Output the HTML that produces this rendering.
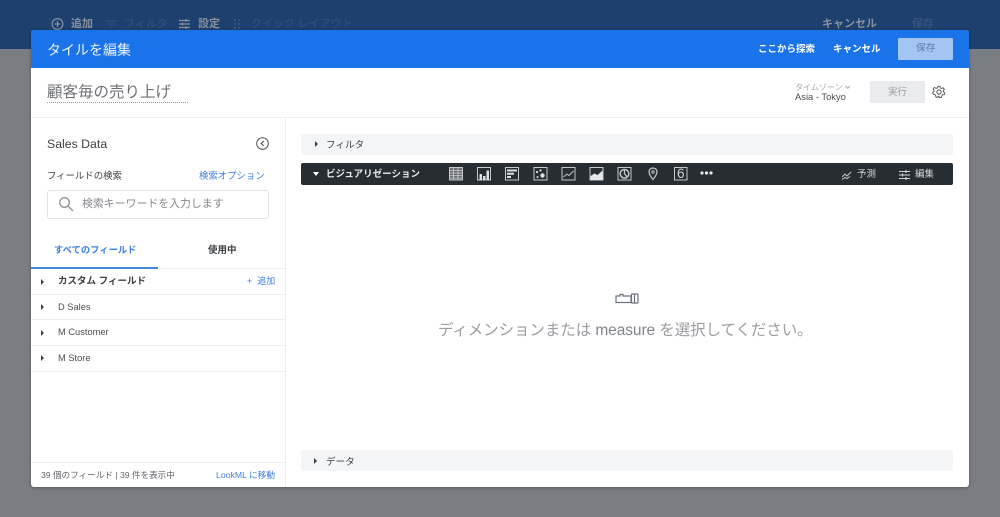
<!DOCTYPE html>
<html lang="ja"><head><meta charset="utf-8">
<style>
html,body{margin:0;padding:0}
body{width:1000px;height:517px;overflow:hidden;position:relative;background:#7a7d82;font-family:"Liberation Sans","Noto Sans CJK JP",sans-serif;color:#3c4043}
.a{position:absolute;white-space:nowrap;line-height:1}
svg{position:absolute;overflow:visible}
#root{position:absolute;left:0;top:0;width:1000px;height:517px;filter:blur(.35px)}
.b{font-weight:700}
.row{position:absolute;left:31px;width:254px;height:1px;background:#eceef0}
.tri{position:absolute;width:0;height:0;border-left:3.500px solid #3c4043;border-top:3px solid transparent;border-bottom:3px solid transparent}
.bar{position:absolute;left:301px;width:652px;background:#f4f5f7;border-radius:2px}
</style></head><body><div id="root">
<div class="a" style="left:0;top:0;width:1000px;height:49px;background:#1e406e"></div>
<svg style="left:51px;top:17px" width="14" height="14" fill="none" stroke="#87909e" stroke-width="1.2"><circle cx="6.500" cy="7" r="5.400"/><path d="M6.500 4v6M3.500 7h6"/></svg>
<div class="a b" style="left:71px;top:19px;font-size:11px;color:#87909e">追加</div>
<svg style="left:105px;top:19px" width="13" height="10" fill="none" stroke="#34547f" stroke-width="1"><path d="M1 2h10M3 5h6M5 8h2"/></svg>
<div class="a" style="left:124px;top:19px;font-size:11px;color:#34547f">フィルタ</div>
<svg style="left:179px;top:18px" width="12" height="12" fill="none" stroke="#87909e" stroke-width="1.2"><path d="M0 2.500h11M0 6h11M0 9.500h11M7 1v3M3.500 4.500v3M7 8v3"/></svg>
<div class="a b" style="left:198px;top:19px;font-size:11px;color:#87909e">設定</div>
<svg style="left:234px;top:19px" width="8" height="10" fill="#34547f"><rect x="0" y="0" width="2" height="2"/><rect x="4" y="0" width="2" height="2"/><rect x="0" y="4" width="2" height="2"/><rect x="4" y="4" width="2" height="2"/><rect x="0" y="8" width="2" height="2"/><rect x="4" y="8" width="2" height="2"/></svg>
<div class="a" style="left:251px;top:19px;font-size:11px;color:#34547f;letter-spacing:-.05px">クイック レイアウト</div>
<div class="a b" style="left:822px;top:19px;font-size:11px;color:#87909e">キャンセル</div>
<div class="a b" style="left:912px;top:19px;font-size:11px;color:#34547f">保存</div>

<div class="a" style="left:31px;top:30px;width:938px;height:457px;background:#fff;border-radius:3px;overflow:hidden;box-shadow:0 1px 3px rgba(0,0,0,.3)"></div>
<div class="a" style="left:31px;top:30px;width:938px;height:38px;background:#1a73e8;border-radius:3px 3px 0 0"></div>
<div class="a" style="left:47px;top:43px;font-size:14px;color:#eaf2fd">タイルを編集</div>
<div class="a b" style="left:758px;top:45px;font-size:9.500px;color:#fff">ここから探索</div>
<div class="a b" style="left:833px;top:45px;font-size:9.500px;color:#fff">キャンセル</div>
<div class="a" style="left:898px;top:38px;width:55px;height:22px;background:#a4c4f3;border-radius:1px"></div>
<div class="a" style="left:916px;top:44px;font-size:9.800px;color:#5f7da8">保存</div>

<div class="a" style="left:47px;top:85px;font-size:15.500px;color:#6d7075">顧客毎の売り上げ</div>
<div class="a" style="left:47px;top:102px;width:141px;height:0;border-top:1px dotted #6f9fec"></div>
<div class="a" style="left:795px;top:84px;font-size:8px;color:#a6a8ac">タイムゾーン</div>
<svg style="left:845px;top:85px" width="6" height="5" fill="none" stroke="#a6a8ac" stroke-width="1"><path d="M.5 1l2.300 2.300L5 1"/></svg>
<div class="a" style="left:795px;top:92px;font-size:9.400px;color:#4b4e52">Asia - Tokyo</div>
<div class="a" style="left:870px;top:81px;width:55px;height:22px;background:#e9ebef;border-radius:1px"></div>
<div class="a" style="left:888px;top:88px;font-size:9.500px;color:#9a9da2">実行</div>
<svg style="left:932px;top:85px" width="14" height="14" viewBox="0 0 24 24" fill="none" stroke="#55585c" stroke-width="1.800"><circle cx="12" cy="12" r="3.600"/><path d="M10 2h4l.6 3 2.400 1.100 2.700-1.500 2.500 3-2 2.300.3 2.600 2.500 1.500-1 3.800-3 0-1.700 2-.3 3-3.900.7-1.500-2.700h-1.200L9.800 23l-3.900-.7-.3-3-1.700-2-3 0-1-3.800 2.500-1.500.3-2.600-2-2.300 2.500-3 2.700 1.500L9.400 5z" stroke-linejoin="round" transform="translate(1.200 .5) scale(.9)"/></svg>
<div class="row" style="left:31px;width:938px;top:117px"></div>
<div class="a" style="left:285px;top:117px;width:1px;height:370px;background:#eceef0"></div>

<div class="a" style="left:47px;top:138px;font-size:12.300px;color:#3c4043">Sales Data</div>
<svg style="left:256px;top:137px" width="13" height="13" fill="none" stroke="#4f5256" stroke-width="1"><circle cx="6.500" cy="6.500" r="5.800"/><path d="M7.800 4L5.200 6.500l2.600 2.500" stroke-width="1.200"/></svg>
<div class="a" style="left:47px;top:171px;font-size:9.400px;color:#3c4043">フィールドの検索</div>
<div class="a" style="left:199px;top:171px;font-size:9.400px;color:#3f80e0">検索オプション</div>
<div class="a" style="left:47px;top:190px;width:220px;height:27px;border:1px solid #dfe1e5;border-radius:3px"></div>
<svg style="left:58px;top:196px" width="16" height="16" fill="none" stroke="#909397" stroke-width="1.300"><circle cx="6.500" cy="6.500" r="4.800"/><path d="M10 10l5 5"/></svg>
<div class="a" style="left:82px;top:199px;font-size:10.900px;color:#85888c">検索キーワードを入力します</div>
<div class="a b" style="left:54px;top:246px;font-size:9.300px;color:#3f80e0">すべてのフィールド</div>
<div class="a b" style="left:208px;top:246px;font-size:9.500px;color:#3c4043">使用中</div>
<div class="row" style="top:268px"></div>
<div class="a" style="left:31px;top:267px;width:127px;height:2px;background:#4285d9"></div>
<div class="row" style="top:294px"></div>
<div class="row" style="top:319px"></div>
<div class="row" style="top:345px"></div>
<div class="row" style="top:371px"></div>
<div class="tri" style="left:41px;top:279px"></div>
<div class="tri" style="left:41px;top:304px"></div>
<div class="tri" style="left:41px;top:330px"></div>
<div class="tri" style="left:41px;top:355px"></div>
<div class="a" style="left:58px;top:277px;font-size:9.500px;color:#3c4043;font-weight:700">カスタム フィールド</div>
<div class="a" style="left:58px;top:303px;font-size:9.300px;color:#4b4e52">D Sales</div>
<div class="a" style="left:58px;top:328px;font-size:9.300px;color:#4b4e52">M Customer</div>
<div class="a" style="left:58px;top:354px;font-size:9.300px;color:#4b4e52">M Store</div>
<div class="a" style="left:247px;top:277px;font-size:9px;color:#3f80e0">+&nbsp;&nbsp;追加</div>
<div class="row" style="top:462px"></div>
<div class="a" style="left:41px;top:471px;font-size:8.600px;color:#5f6368">39 個のフィールド | 39 件を表示中</div>
<div class="a" style="left:216px;top:471px;font-size:8.700px;color:#3f80e0">LookML に移動</div>

<div class="bar" style="top:134px;height:21px"></div>
<div class="tri" style="left:315px;top:141px"></div>
<div class="a" style="left:326px;top:141px;font-size:9.500px;color:#3c4043;letter-spacing:.1px">フィルタ</div>
<div class="a" style="left:301px;top:163px;width:652px;height:22px;background:#262d33;border-radius:2px"></div>
<div class="a" style="left:313px;top:172px;width:0;height:0;border-top:4px solid #fff;border-left:3.500px solid transparent;border-right:3.500px solid transparent"></div>
<div class="a b" style="left:326px;top:170px;font-size:9.500px;color:#e8eaed">ビジュアリゼーション</div>
<svg style="left:449px;top:167px" width="270" height="14" fill="none" stroke="#c6c8cb" stroke-width="1">
<g><rect x=".5" y=".5" width="13" height="12.500" fill="#6b6f74"/><path d="M.5 3.500h13M.5 6h13M.5 8.500h13M.5 11h13M4.500 .5v12.500M9 .5v12.500" stroke-width=".8"/></g>
<g transform="translate(28 0)"><rect x=".5" y=".5" width="13" height="12.500"/><path d="M2.500 7h2.500v6H2.500zM6 9h2.500v4H6zM9.500 3.500H12V13H9.500z" fill="#dfe1e3" stroke="none"/></g>
<g transform="translate(56 0)"><rect x=".5" y=".5" width="13" height="12.500"/><path d="M2 2.500h10v2H2zM2 5.800h7v2H2zM2 9h4v2H2z" fill="#dfe1e3" stroke="none"/></g>
<g transform="translate(84.500 0)"><rect x=".5" y=".5" width="13" height="12.500"/><circle cx="3.500" cy="5" r="1.100" fill="#dfe1e3" stroke="none"/><circle cx="7" cy="3.500" r="1.100" fill="#dfe1e3" stroke="none"/><circle cx="9" cy="8.500" r="2.200" fill="#dfe1e3" stroke="none"/><circle cx="4" cy="10" r="1" fill="#dfe1e3" stroke="none"/></g>
<g transform="translate(112.500 0)"><rect x=".5" y=".5" width="13" height="12.500"/><path d="M2 10l3.500-3 2 1.500L12 4"/></g>
<g transform="translate(140.500 0)"><rect x=".5" y=".5" width="13" height="12.500"/><path d="M1 13V9l4-2.500L8 8l5-4.500V13z" fill="#e4e6e8" stroke="none"/></g>
<g transform="translate(168.500 0)"><rect x=".5" y=".5" width="13" height="12.500"/><circle cx="7" cy="6.800" r="4.300" stroke-width="1.500"/><path d="M7 2.300v4.500l3 3.500" stroke-width="1.200"/></g>
<path d="M204 1c-2.300 0-4 1.700-4 3.800 0 2.800 4 7.700 4 7.700s4-4.900 4-7.700C208 2.700 206.300 1 204 1z" stroke-width="1.200"/><circle cx="204" cy="5" r="1.200"/>
<rect x="225.500" y=".5" width="12.500" height="12.500"/>
</svg>
<div class="a" style="left:677px;top:167px;font-size:13.500px;color:#d4d6d8">6</div>
<svg style="left:700px;top:170px" width="14" height="6" fill="#e8eaed"><circle cx="2" cy="3" r="1.600"/><circle cx="6.500" cy="3" r="1.600"/><circle cx="11" cy="3" r="1.600"/></svg>
<svg style="left:841px;top:170px" width="11" height="10" fill="none" stroke="#c8cacc" stroke-width="1"><path d="M1 7l3-3 2 2 4-4M1 9.500l3-2 2 1 3-2"/></svg>
<div class="a" style="left:857px;top:170px;font-size:9.500px;color:#d4d6d8">予測</div>
<svg style="left:899px;top:170px" width="11" height="10" fill="none" stroke="#d4d6d8" stroke-width="1.100"><path d="M0 1.500h11M0 5h11M0 8.500h11M7 0v3M3.500 3.500v3M7 7v3"/></svg>
<div class="a" style="left:915px;top:170px;font-size:9.500px;color:#d4d6d8">編集</div>

<svg style="left:615px;top:292px" width="24" height="12" fill="none" stroke="#6b7280" stroke-width="1.200"><path d="M1 4h4V2.500h3V4h8v6.500H1z"/><rect x="16.500" y="2" width="6.500" height="9" rx=".8"/><path d="M19.500 2v9"/></svg>
<div class="a" style="left:438px;top:323px;font-size:15.500px;color:#9a9da2;letter-spacing:-.08px">ディメンションまたは <span style="color:#80858b">measure</span> を選択してください。</div>

<div class="bar" style="top:450px;height:21px"></div>
<div class="tri" style="left:314px;top:458px"></div>
<div class="a" style="left:326px;top:458px;font-size:9.500px;color:#3c4043;letter-spacing:.1px">データ</div>
</div></body></html>
